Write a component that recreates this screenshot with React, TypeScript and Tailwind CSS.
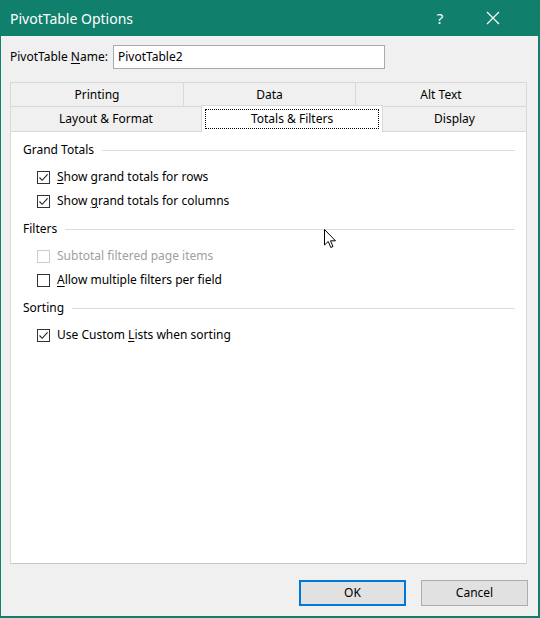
import React from 'react';

const FONT = { fontFamily: '"Noto Sans", "Open Sans", sans-serif' };

const Check = ({ checked, disabled }: { checked?: boolean; disabled?: boolean }) => (
  <span
    className={`w-[13px] h-[13px] shrink-0 border bg-white flex items-center justify-center ${
      disabled ? 'border-[#cccccc]' : 'border-[#333333]'
    }`}
  >
    {checked && (
      <svg width="11" height="11" viewBox="0 0 11 11">
        <path d="M1.5 5.5 L4.2 8.3 L9.6 2.4" fill="none" stroke="#222" strokeWidth="1.1" />
      </svg>
    )}
  </span>
);

// label with one access key underlined
const Label = ({ pre, u, post }: { pre: string; u: string; post: string }) => (
  <span>
    {pre}
    <span className="underline underline-offset-2">{u}</span>
    {post}
  </span>
);

const Row = ({ children, checked, disabled }: { children: React.ReactNode; checked?: boolean; disabled?: boolean }) => (
  <div className="h-[24px] flex items-center pl-[26px] gap-[7px]">
    <Check checked={checked} disabled={disabled} />
    <span className={disabled ? 'text-[#a0a0a0]' : 'text-black'}>{children}</span>
  </div>
);

const Header = ({ title, first }: { title: string; first?: boolean }) => (
  <div className={`h-[20px] flex items-center pl-[12px] pr-[11px] gap-[8px] ${first ? '' : 'mt-[6px]'}`}>
    <span className="text-black">{title}</span>
    <div className="flex-1 h-px bg-[#dcdcdc]" />
  </div>
);

const Tab = ({ label, w }: { label: string; w: string }) => (
  <div className={`${w} h-full flex items-center justify-center border-t border-r border-[#d9d9d9] bg-[#f0f0f0] text-black`}>
    {label}
  </div>
);

export default function App() {
  return (
    <div className="relative w-[540px] h-[618px] bg-[#10806c] flex flex-col text-[12px]" style={FONT}>
      {/* title bar */}
      <div className="h-[36px] shrink-0 flex items-center pl-[10px] text-white">
        <span className="text-[14px]">PivotTable Options</span>
        <span className="ml-auto w-[20px] text-center text-[15px] mr-[36px]">?</span>
        <svg width="14" height="14" viewBox="0 0 14 14" className="mr-[40px]">
          <path d="M1 1 L13 13 M13 1 L1 13" stroke="white" strokeWidth="1.2" />
        </svg>
      </div>

      {/* body */}
      <div className="flex-1 ml-[1px] mr-[2px] mb-[2px] bg-[#f0f0f0] flex flex-col pl-[9px] pr-[9px]">
        <div className="mt-[9px] h-[24px] flex items-center">
          <span className="w-[103px]">
            PivotTable <span className="underline underline-offset-2">N</span>ame:
          </span>
          <div className="w-[272px] h-[24px] border border-[#a9a9a9] bg-white flex items-center pl-[4px]">
            PivotTable2
          </div>
        </div>

        {/* tabs */}
        <div className="mt-[13px] w-[517px]">
          <div className="h-[24px] flex border-l border-[#d9d9d9]">
            <Tab label="Printing" w="w-[173px]" />
            <Tab label="Data" w="w-[172px]" />
            <Tab label="Alt Text" w="w-[171px]" />
          </div>
          <div className="h-[25px] flex items-end border-l border-[#d9d9d9]">
            <div className="w-[190px] h-[25px] flex items-center justify-center border-t border-[#d9d9d9] bg-[#f0f0f0]">
              Layout &amp; Format
            </div>
            <div className="w-[182px] h-[27px] -mt-[2px] bg-white border-x border-t border-[#d9d9d9] p-[3px] relative z-10 -mb-[1px]">
              <div className="w-full h-full border border-dotted border-black flex items-center justify-center">
                Totals &amp; Filters
              </div>
            </div>
            <div className="flex-1 h-[25px] flex items-center justify-center border-t border-r border-[#d9d9d9] bg-[#f0f0f0]">
              Display
            </div>
          </div>

          {/* panel */}
          <div className="h-[433px] bg-white border-x border-b border-t border-[#d9d9d9] border-b-[#c8c8c8] pt-[8px]">
            <Header title="Grand Totals" first />
            <div className="mt-[5px]">
              <Row checked>
                <Label pre="" u="S" post="how grand totals for rows" />
              </Row>
              <Row checked>
                <Label pre="Show " u="g" post="rand totals for columns" />
              </Row>
            </div>
            <Header title="Filters" />
            <div className="mt-[5px]">
              <Row disabled>Subtotal filtered page items</Row>
              <Row>
                <Label pre="" u="A" post="llow multiple filters per field" />
              </Row>
            </div>
            <Header title="Sorting" />
            <div className="mt-[5px]">
              <Row checked>
                <Label pre="Use Custom " u="L" post="ists when sorting" />
              </Row>
            </div>
          </div>
        </div>

        {/* buttons */}
        <div className="mt-[16px] w-[518px] flex justify-end gap-[15px]">
          <button className="w-[107px] h-[26px] bg-[#e1e1e1] border-2 border-[#0078d7] text-black">OK</button>
          <button className="w-[107px] h-[26px] bg-[#e1e1e1] border border-[#adadad] text-black">Cancel</button>
        </div>
      </div>

      {/* mouse pointer */}
      <svg width="13" height="20" viewBox="0 0 13 20" className="absolute left-[324px] top-[229px] z-20">
        <path d="M0.5 0.5 L0.5 16 L4.2 12.5 L6.8 18.5 L9 17.5 L6.5 11.8 L11.5 11.8 Z" fill="white" stroke="black" strokeWidth="1" strokeLinejoin="miter" />
      </svg>
    </div>
  );
}
